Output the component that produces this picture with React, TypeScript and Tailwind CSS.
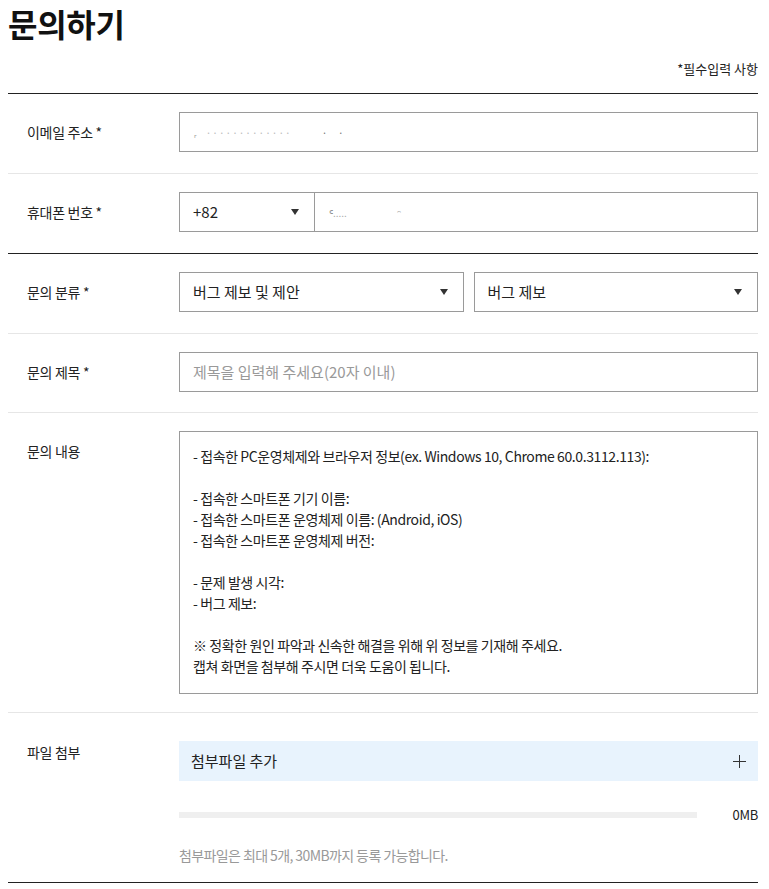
import React from "react";

const font = { fontFamily: '"Noto Sans CJK KR", "Noto Sans", sans-serif' };

function Caret() {
  return (
    <svg width="8" height="6" viewBox="0 0 8 6" className="shrink-0">
      <path d="M0 0 L8 0 L4 6 Z" fill="#333" />
    </svg>
  );
}

function Row({
  label,
  children,
  border = "light",
  align = "center",
  pb = "pb-[21px]",
}: {
  label: string;
  children: React.ReactNode;
  border?: "light" | "dark";
  align?: "center" | "top";
  pb?: string;
}) {
  return (
    <div
      className={`flex pt-[18px] ${pb} border-b ${
        border === "dark" ? "border-[#222]" : "border-[#e6e6e6]"
      } ${align === "center" ? "items-center" : "items-start"}`}
    >
      <div
        className={`w-[171px] shrink-0 pl-[19px] text-[14px] text-[#222] tracking-[-0.3px] ${
          align === "top" ? "pt-[10px]" : ""
        }`}
      >
        {label}
      </div>
      <div className="flex-1 min-w-0">{children}</div>
    </div>
  );
}

export default function App() {
  const lines = [
    "- 접속한 PC운영체제와 브라우저 정보(ex. Windows 10, Chrome 60.0.3112.113):",
    "",
    "- 접속한 스마트폰 기기 이름:",
    "- 접속한 스마트폰 운영체제 이름: (Android, iOS)",
    "- 접속한 스마트폰 운영체제 버전:",
    "",
    "- 문제 발생 시각:",
    "- 버그 제보:",
    "",
    "※ 정확한 원인 파악과 신속한 해결을 위해 위 정보를 기재해 주세요.",
    "캡쳐 화면을 첨부해 주시면 더욱 도움이 됩니다.",
  ];
  return (
    <div className="bg-white w-[769px] min-h-[889px] pl-[8px] pr-[11px]" style={font}>
      <h1 className="text-[32px] font-bold text-[#111] leading-[46px] tracking-[-0.3px]">
        문의하기
      </h1>
      <div className="flex justify-end pt-[13px] pb-[14px] text-[13px] leading-[20px] text-[#222]">
        *필수입력 사항
      </div>
      <div className="border-t border-[#222]">
        <Row label="이메일 주소 *">
          <div className="h-[40px] border border-[#9a9a9a] flex items-center px-[14px] text-[10px] text-[#bbb] tracking-[1px]">
            <span className="text-[#999]">ᵣ</span>
            <span className="ml-[8px]">·············</span>
            <span className="ml-[30px] text-[#777]">· &nbsp; ·</span>
          </div>
        </Row>
        <Row label="휴대폰 번호 *" border="dark">
          <div className="flex h-[40px]">
            <div className="w-[136px] shrink-0 border border-[#9a9a9a] flex items-center justify-between pl-[13px] pr-[15px] text-[15px] text-[#222]">
              <span>+82</span>
              <Caret />
            </div>
            <div className="flex-1 border border-l-0 border-[#9a9a9a] flex items-center px-[14px] text-[10px] text-[#aaa]">
              <span className="text-[#888]">ᑦ</span>
              <span>.....</span>
              <span className="ml-[50px] text-[#999]">ᵔ</span>
            </div>
          </div>
        </Row>
        <Row label="문의 분류 *">
          <div className="grid grid-cols-2 gap-[10px]">
            <div className="h-[40px] border border-[#9a9a9a] flex items-center justify-between pl-[13px] pr-[15px] text-[15px] text-[#222]">
              <span>버그 제보 및 제안</span>
              <Caret />
            </div>
            <div className="h-[40px] border border-[#9a9a9a] flex items-center justify-between pl-[13px] pr-[15px] text-[15px] text-[#222]">
              <span>버그 제보</span>
              <Caret />
            </div>
          </div>
        </Row>
        <Row label="문의 제목 *" pb="pb-[20px]">
          <div className="h-[40px] border border-[#9a9a9a] flex items-center px-[13px] text-[15px] text-[#999]">
            제목을 입력해 주세요(20자 이내)
          </div>
        </Row>
        <Row label="문의 내용" align="top" pb="pb-[18px]">
          <div className="h-[263px] border border-[#9a9a9a] px-[13px] pt-[14px] text-[14px] leading-[21px] text-[#222] tracking-[-0.4px]">
            {lines.map((l, i) => (
              <div key={i} className="h-[21px] whitespace-nowrap">
                {l}
              </div>
            ))}
          </div>
        </Row>
        <div className="flex items-start pt-[28px] pb-[17px] border-b border-[#222]">
          <div className="w-[171px] shrink-0 pl-[19px] text-[14px] text-[#222] tracking-[-0.3px] pt-[1px]">
            파일 첨부
          </div>
          <div className="flex-1 min-w-0">
            <div className="h-[40px] bg-[#e8f3fd] flex items-center justify-between pl-[12px] pr-[12px] text-[15px] text-[#222]">
              <span>첨부파일 추가</span>
              <svg width="13" height="13" viewBox="0 0 13 13">
                <path d="M6.5 0 V13 M0 6.5 H13" stroke="#333" strokeWidth="1" />
              </svg>
            </div>
            <div className="flex items-center mt-[24px] h-[20px]">
              <div className="w-[518px] h-[6px] bg-[#efefef]" />
              <div className="flex-1 text-right text-[13px] text-[#222] tracking-[-0.3px]">0MB</div>
            </div>
            <div className="mt-[20px] text-[14px] leading-[20px] text-[#999] tracking-[-0.6px]">
              첨부파일은 최대 5개, 30MB까지 등록 가능합니다.
            </div>
          </div>
        </div>
      </div>
    </div>
  );
}
